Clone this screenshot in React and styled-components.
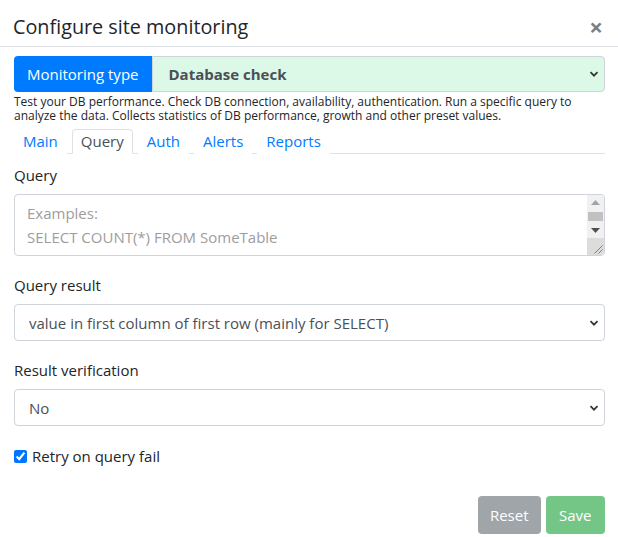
import React from 'react';
import styled, { createGlobalStyle } from 'styled-components';

const GlobalStyle = createGlobalStyle`
  body {
    margin: 0;
    background: #fff;
    font-family: "Open Sans", "Noto Sans", sans-serif;
    color: #212529;
  }
`;

const chevron =
  "url(\"data:image/svg+xml;utf8,<svg xmlns='http://www.w3.org/2000/svg' width='10' height='8' viewBox='0 0 10 8'><path d='M1.5 2.2l3.5 3.5 3.5-3.5' fill='none' stroke='%23333' stroke-width='1.7'/></svg>\")";

const Modal = styled.div`
  width: 618px;
  height: 537px;
  background: #fff;
  display: flex;
  flex-direction: column;
  overflow: hidden;
`;

const Header = styled.div`
  height: 47px;
  box-sizing: border-box;
  border-bottom: 1px solid #dee2e6;
  display: flex;
  align-items: center;
  justify-content: space-between;
  padding: 8px 15px 0 13px;
`;

const Title = styled.h5`
  margin: 0;
  font-size: 19.8px;
  line-height: 24px;
  font-weight: 500;
  color: #212529;
`;

const Close = styled.button`
  border: 0;
  background: none;
  padding: 0;
  font-size: 24px;
  font-weight: 700;
  line-height: 1;
  color: #000;
  opacity: 0.5;
  font-family: inherit;
`;

const Body = styled.div`
  padding: 9px 13px 0 14px;
  display: flex;
  flex-direction: column;
`;

const InputGroup = styled.div`
  display: flex;
  height: 36px;
`;

const Prepend = styled.span`
  background: #007bff;
  color: #fff;
  font-size: 15px;
  display: flex;
  align-items: center;
  padding: 0 13px 0 13px;
  border-radius: 4px 0 0 4px;
  white-space: nowrap;
`;

const Select = styled.select`
  display: block;
  width: 100%;
  min-width: 0;
  height: ${(p) => p.$h || 37}px;
  box-sizing: border-box;
  font-family: inherit;
  font-size: 15px;
  font-weight: ${(p) => (p.$bold ? 700 : 400)};
  color: #495057;
  background-color: ${(p) => p.$bg || '#fff'};
  border: 1px solid #ced4da;
  border-radius: ${(p) => (p.$joined ? '0 4px 4px 0' : '4px')};
  padding: 0 20px 0 ${(p) => (p.$bold ? 16 : 14)}px;
  appearance: none;
  background-image: ${chevron};
  background-repeat: no-repeat;
  background-position: right 5px center;
`;

const Help = styled.p`
  margin: 3px 0 0;
  font-size: 12px;
  line-height: 14px;
  color: #212529;
`;

const Tabs = styled.ul`
  list-style: none;
  margin: 6px 0 0;
  padding: 0;
  display: flex;
  gap: 5px;
  border-bottom: 1px solid #dee2e6;
`;

const Tab = styled.li`
  font-size: 15px;
  line-height: 23px;
  padding: 0 8px;
  margin-bottom: -1px;
  color: ${(p) => (p.$active ? '#495057' : '#007bff')};
  border: 1px solid ${(p) => (p.$active ? '#dee2e6' : 'transparent')};
  border-bottom-color: ${(p) => (p.$active ? '#fff' : 'transparent')};
  border-radius: 4px 4px 0 0;
  background: #fff;
`;

const Label = styled.label`
  display: block;
  font-size: 15px;
  line-height: 22px;
  margin: ${(p) => p.$top || 18}px 0 8px;
`;

const TextAreaWrap = styled.div`
  position: relative;
  height: 62px;
`;

const TextArea = styled.textarea`
  display: block;
  width: 100%;
  height: 62px;
  box-sizing: border-box;
  font-family: inherit;
  font-size: 15px;
  line-height: 24px;
  padding: 6px 30px 0 12px;
  border: 1px solid #ced4da;
  border-radius: 4px;
  overflow: hidden;
  resize: none;
  &::placeholder {
    color: #9d9d9d;
  }
`;

/* classic scrollbar + resize grip drawn over the textarea's right edge */
const Scrollbar = styled.div`
  position: absolute;
  top: 1px;
  right: 1px;
  bottom: 1px;
  width: 17px;
  display: flex;
  flex-direction: column;
  background: #f1f1f1;
  border-radius: 0 3px 3px 0;
  overflow: hidden;
  pointer-events: none;
`;

const ScrollButton = styled.div`
  height: 15px;
  display: flex;
  align-items: center;
  justify-content: center;
`;

const Track = styled.div`
  flex: 1;
  padding: 2px 1px 1px;
  display: flex;
  flex-direction: column;
`;

const Thumb = styled.div`
  height: 9px;
  background: #c1c1c1;
`;

const Corner = styled.div`
  height: 17px;
  background: #dcdcdc;
  display: flex;
  align-items: flex-end;
  justify-content: flex-end;
`;

const Arrow = ({ dir, color }) => (
  <svg width="9" height="5" viewBox="0 0 9 5">
    <path d={dir === 'up' ? 'M0 5h9L4.5 0z' : 'M0 0h9L4.5 5z'} fill={color} />
  </svg>
);

const Grip = () => (
  <svg width="17" height="17" viewBox="0 0 17 17">
    <path d="M15.5 7.5l-8 8M15.5 11.5l-4 4" stroke="#808080" strokeWidth="1" />
  </svg>
);

const Check = styled.label`
  display: flex;
  align-items: center;
  gap: 5px;
  font-size: 15px;
  line-height: 22px;
  margin-top: 19px;
  input {
    margin: 0;
    width: 13px;
    height: 13px;
    accent-color: #0075ff;
  }
`;

const Footer = styled.div`
  display: flex;
  justify-content: flex-end;
  gap: 5px;
  margin-top: 29px;
`;

const Button = styled.button`
  height: 38px;
  padding: 0 ${(p) => p.$px}px;
  border: 0;
  border-radius: 4px;
  font-family: inherit;
  font-size: 15px;
  color: #fff;
  background: ${(p) => p.$bg};
`;

const placeholder = ['Examples:', 'SELECT COUNT(*) FROM SomeTable', 'SELECT MAX(Id) FROM SomeTable'].join('\n');

const App = () => (
  <Modal>
    <GlobalStyle />
    <Header>
      <Title>Configure site monitoring</Title>
      <Close>×</Close>
    </Header>
    <Body>
      <InputGroup>
        <Prepend>Monitoring type</Prepend>
        <Select $bold $joined $bg="#dcf8e6" $h={36} defaultValue="db">
          <option value="db">Database check</option>
        </Select>
      </InputGroup>
      <Help>
        Test your DB performance. Check DB connection, availability, authentication. Run a specific query to
        analyze the data. Collects statistics of DB performance, growth and other preset values.
      </Help>
      <Tabs>
        <Tab>Main</Tab>
        <Tab $active>Query</Tab>
        <Tab>Auth</Tab>
        <Tab>Alerts</Tab>
        <Tab>Reports</Tab>
      </Tabs>
      <Label $top={10}>Query</Label>
      <TextAreaWrap>
        <TextArea placeholder={placeholder} />
        <Scrollbar>
          <ScrollButton>
            <Arrow dir="up" color="#a3a3a3" />
          </ScrollButton>
          <Track>
            <Thumb />
          </Track>
          <ScrollButton>
            <Arrow dir="down" color="#505050" />
          </ScrollButton>
          <Corner>
            <Grip />
          </Corner>
        </Scrollbar>
      </TextAreaWrap>
      <Label>Query result</Label>
      <Select defaultValue="v">
        <option value="v">value in first column of first row (mainly for SELECT)</option>
      </Select>
      <Label>Result verification</Label>
      <Select defaultValue="no">
        <option value="no">No</option>
      </Select>
      <Check>
        <input type="checkbox" defaultChecked />
        Retry on query fail
      </Check>
      <Footer>
        <Button $bg="#a0a5aa" $px={12}>Reset</Button>
        <Button $bg="#74c687" $px={13.5}>Save</Button>
      </Footer>
    </Body>
  </Modal>
);

export default App;
